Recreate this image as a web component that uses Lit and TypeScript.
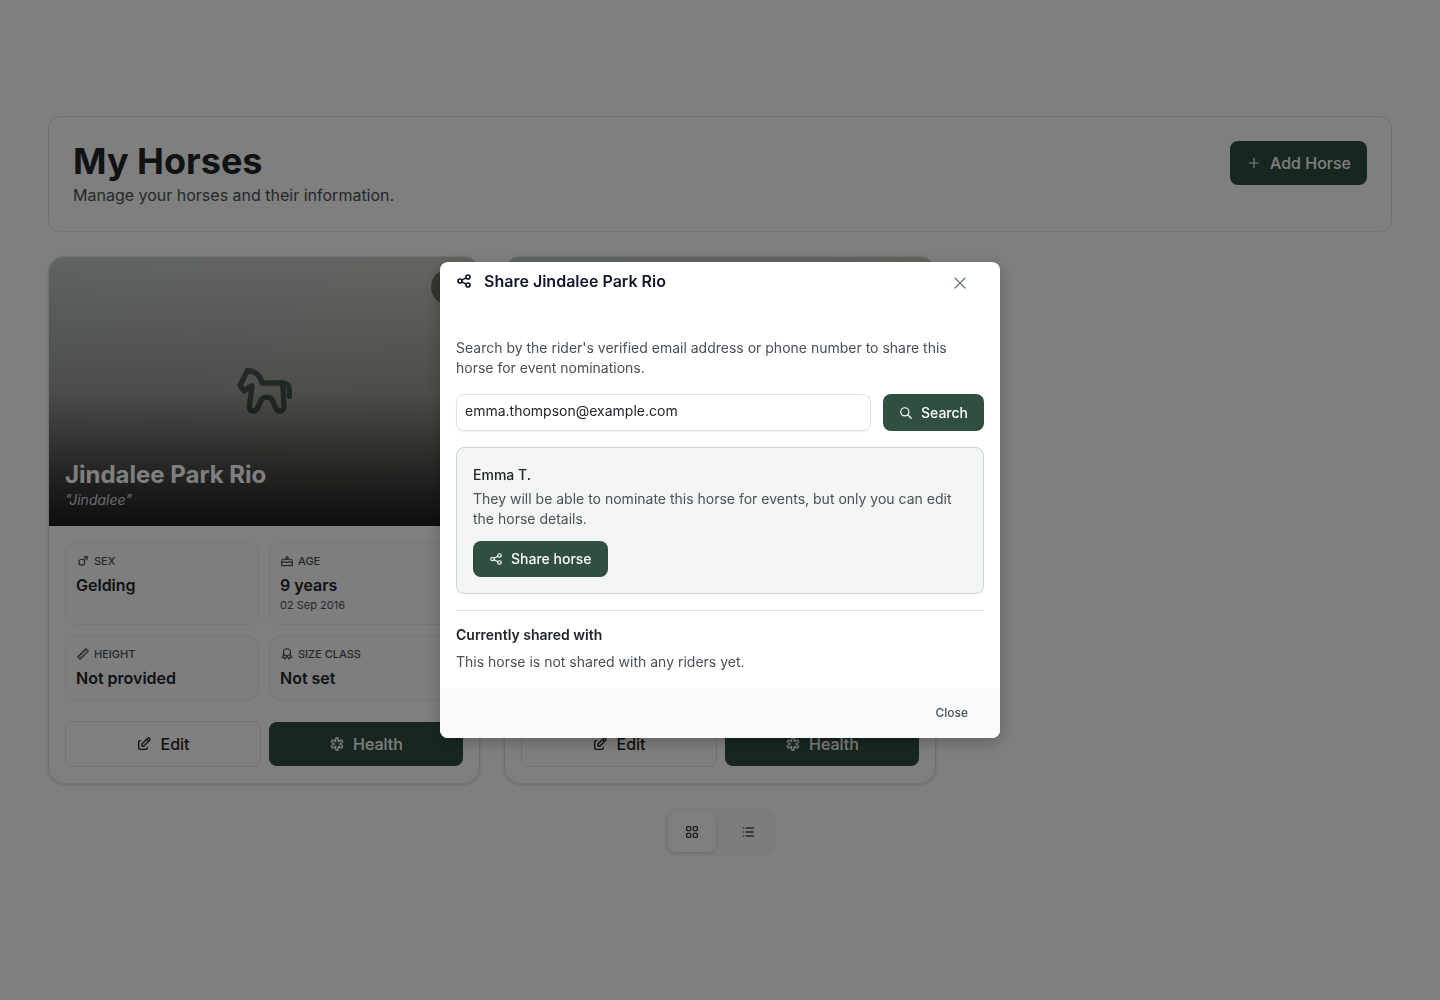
import { LitElement, html, css, svg } from "lit";
import { customElement, property, state } from "lit/decorators.js";

const ICONS: Record<string, string[]> = {
  plus: ["M12 5v14", "M5 12h14"],
  close: ["M18 6L6 18", "M6 6l12 12"],
  search: ["M3 10a7 7 0 1 0 14 0a7 7 0 1 0 -14 0", "M21 21l-6 -6"],
  share: [
    "M3 12a3 3 0 1 0 6 0a3 3 0 1 0 -6 0",
    "M15 6a3 3 0 1 0 6 0a3 3 0 1 0 -6 0",
    "M15 18a3 3 0 1 0 6 0a3 3 0 1 0 -6 0",
    "M8.7 10.7l6.6 -3.4",
    "M8.7 13.3l6.6 3.4",
  ],
  edit: [
    "M7 7h-1a2 2 0 0 0 -2 2v9a2 2 0 0 0 2 2h9a2 2 0 0 0 2 -2v-1",
    "M20.385 6.585a2.1 2.1 0 0 0 -2.97 -2.97l-8.415 8.385v3h3l8.385 -8.415z",
    "M16 5l3 3",
  ],
  health: [
    "M13 3a1 1 0 0 1 1 1v4.535l3.928 -2.267a1 1 0 0 1 1.366 .366l1 1.732a1 1 0 0 1 -.366 1.366l-3.927 2.268l3.927 2.269a1 1 0 0 1 .366 1.366l-1 1.732a1 1 0 0 1 -1.366 .366l-3.928 -2.269v4.536a1 1 0 0 1 -1 1h-2a1 1 0 0 1 -1 -1v-4.536l-3.928 2.268a1 1 0 0 1 -1.366 -.366l-1 -1.732a1 1 0 0 1 .366 -1.366l3.927 -2.267l-3.927 -2.268a1 1 0 0 1 -.366 -1.366l1 -1.732a1 1 0 0 1 1.366 -.366l3.928 2.267v-4.535a1 1 0 0 1 1 -1h2z",
  ],
  male: ["M5 14a5 5 0 1 0 10 0a5 5 0 1 0 -10 0", "M19 5l-5.4 5.4", "M19 5h-5", "M19 5v5"],
  cake: [
    "M3 20h18v-8a3 3 0 0 0 -3 -3h-12a3 3 0 0 0 -3 3v8z",
    "M3 14.803c.312 .135 .654 .204 1 .197a2.4 2.4 0 0 0 2 -1a2.4 2.4 0 0 1 2 -1a2.4 2.4 0 0 1 2 1a2.4 2.4 0 0 0 2 1a2.4 2.4 0 0 0 2 -1a2.4 2.4 0 0 1 2 -1a2.4 2.4 0 0 1 2 1a2.4 2.4 0 0 0 2 1c.35 .007 .692 -.062 1 -.197",
    "M12 4l1.465 1.638a2 2 0 1 1 -3.015 .099l1.55 -1.737z",
  ],
  ruler: [
    "M17 3l4 4l-14 14l-4 -4z",
    "M16 7l-1.5 -1.5",
    "M13 10l-1.5 -1.5",
    "M10 13l-1.5 -1.5",
    "M7 16l-1.5 -1.5",
  ],
  award: [
    "M6 9a6 6 0 1 0 12 0a6 6 0 1 0 -12 0",
    "M12 15l3.4 5.89l1.598 -3.233l3.598 .232l-3.4 -5.889",
    "M6.802 12l-3.4 5.89l3.598 -.233l1.598 3.232l3.4 -5.889",
  ],
  grid: [
    "M5 4h4a1 1 0 0 1 1 1v4a1 1 0 0 1 -1 1h-4a1 1 0 0 1 -1 -1v-4a1 1 0 0 1 1 -1z",
    "M15 4h4a1 1 0 0 1 1 1v4a1 1 0 0 1 -1 1h-4a1 1 0 0 1 -1 -1v-4a1 1 0 0 1 1 -1z",
    "M5 14h4a1 1 0 0 1 1 1v4a1 1 0 0 1 -1 1h-4a1 1 0 0 1 -1 -1v-4a1 1 0 0 1 1 -1z",
    "M15 14h4a1 1 0 0 1 1 1v4a1 1 0 0 1 -1 1h-4a1 1 0 0 1 -1 -1v-4a1 1 0 0 1 1 -1z",
  ],
  list: ["M9 6h11", "M9 12h11", "M9 18h11", "M5 6v.01", "M5 12v.01", "M5 18v.01"],
  horse: [
    "M11.2 9H19L19.5 17.7C19.6 18.8 18.9 19.5 18 19.5C17.2 19.5 16.7 19.1 16.4 18.4L15.3 15.8C14.9 14.8 14.3 14.4 13.5 14.4H12.5C11.7 14.4 11.2 14.8 10.8 15.7L9.6 18.4C9.2 19.2 8.6 19.5 7.9 19.5C7 19.5 6.4 18.8 6.5 17.8L7.5 10L4.5 12L3 9.9L5.8 4.3C8.4 4.3 10.8 6.3 11.2 9z",
    "M19 9C20.6 9 21.5 10.1 21.5 11.4V14",
  ],
  more: ["M11 12h2", "M11 19h2", "M11 5h2"],
};

@customElement("ui-icon")
export class UiIcon extends LitElement {
  @property() name = "";
  @property({ type: Number }) size = 16;
  @property({ type: Number }) weight = 2;

  static styles = css`
    :host {
      display: inline-flex;
      flex: none;
    }
    .icon {
      display: block;
      fill: none;
      stroke: currentColor;
      stroke-linecap: round;
      stroke-linejoin: round;
    }
  `;

  render() {
    return html`<svg
      class="icon"
      width=${this.size}
      height=${this.size}
      viewBox="0 0 24 24"
      stroke-width=${this.weight}
      aria-hidden="true"
    >
      ${(ICONS[this.name] ?? []).map((d) => svg`<path d=${d}></path>`)}
    </svg>`;
  }
}

const controls = css`
  * {
    box-sizing: border-box;
  }
  h1, h2, h3, p, dl, dd, dt {
    margin: 0;
  }
  button, input {
    font: inherit;
    color: inherit;
  }
  .btn {
    display: inline-flex;
    align-items: center;
    justify-content: center;
    gap: 8px;
    padding: 10px 16px;
    border: 0;
    border-radius: 8px;
    font-size: 16px;
    font-weight: 500;
    line-height: 24px;
    white-space: nowrap;
    cursor: pointer;
  }
  .primary {
    background: #2f4f3f;
    color: #fff;
  }
  .small {
    padding: 8px 16px;
    font-size: 14px;
    line-height: 20px;
  }
`;

interface Fact {
  icon: string;
  label: string;
  value: string;
  note?: string;
}

interface Horse {
  name?: string;
  nickname?: string;
  facts: Fact[];
}

@customElement("horse-card")
export class HorseCard extends LitElement {
  @property({ attribute: false }) horse!: Horse;

  static styles = [
    controls,
    css`
      :host {
        display: flex;
      }
      .card {
        display: flex;
        flex: 1;
        flex-direction: column;
        overflow: hidden;
        border: 1px solid #dee2e6;
        border-radius: 16px;
        background: #fff;
        box-shadow: 0 1px 3px rgba(0, 0, 0, 0.16);
      }
      .photo {
        position: relative;
        display: flex;
        align-items: center;
        justify-content: center;
        aspect-ratio: 16 / 10;
        color: #566d5e;
        background: linear-gradient(135deg, #c4d0cf 0%, #d0d1cb 45%, #d2d2c2 72%, #d6d5d0 100%);
      }
      .shade {
        position: absolute;
        inset: 0;
        background: linear-gradient(
          to bottom,
          rgba(0, 0, 0, 0.03) 0%,
          rgba(0, 0, 0, 0.15) 25%,
          rgba(0, 0, 0, 0.26) 50%,
          rgba(0, 0, 0, 0.5) 68%,
          rgba(0, 0, 0, 0.7) 84%,
          rgba(0, 0, 0, 0.87) 100%
        );
      }
      .caption {
        position: absolute;
        left: 16px;
        right: 16px;
        bottom: 16px;
        z-index: 1;
        color: #fff;
      }
      .name {
        font-size: 24px;
        font-weight: 700;
        line-height: 30px;
      }
      .nickname {
        font-size: 14px;
        font-style: italic;
        line-height: 20px;
        color: rgba(255, 255, 255, 0.8);
      }
      .more {
        position: absolute;
        top: 12px;
        right: 12px;
        z-index: 1;
        display: flex;
        align-items: center;
        justify-content: center;
        width: 36px;
        height: 36px;
        padding: 0;
        border: 0;
        border-radius: 50%;
        background: rgba(0, 0, 0, 0.44);
        color: #fff;
      }
      .body {
        display: flex;
        flex: 1;
        flex-direction: column;
        justify-content: space-between;
        gap: 20px;
        padding: 16px;
      }
      .facts {
        display: grid;
        grid-template-columns: 1fr 1fr;
        gap: 10px;
      }
      .fact {
        padding: 10px;
        border: 1px solid #eceeef;
        border-radius: 12px;
        background: #fcfcfc;
      }
      .label {
        display: flex;
        align-items: center;
        gap: 4px;
        margin-bottom: 4px;
        font-size: 11px;
        font-weight: 500;
        line-height: 16px;
        color: #495057;
        text-transform: uppercase;
      }
      .value {
        font-size: 16px;
        font-weight: 600;
        line-height: 24px;
        color: #212529;
      }
      .note {
        font-size: 11px;
        line-height: 17px;
        color: #495057;
      }
      .actions {
        display: flex;
        align-items: center;
        gap: 8px;
      }
      .actions .btn {
        flex: 1;
      }
      .outline {
        border: 1px solid #dee2e6;
        background: #fff;
        color: #212529;
      }
    `,
  ];

  private fact(f: Fact) {
    return html`<div class="fact">
      <dt class="label"><ui-icon name=${f.icon} size="14"></ui-icon>${f.label}</dt>
      <dd class="value">${f.value}</dd>
      ${f.note ? html`<dd class="note">${f.note}</dd>` : ""}
    </div>`;
  }

  render() {
    const h = this.horse;
    return html`<article class="card">
      <div class="photo">
        <ui-icon name="horse" size="64"></ui-icon>
        <div class="shade"></div>
        <button class="more" aria-label="More"><ui-icon name="more" size="16"></ui-icon></button>
        ${h.name
          ? html`<div class="caption">
              <h2 class="name">${h.name}</h2>
              <p class="nickname">"${h.nickname}"</p>
            </div>`
          : ""}
      </div>
      <div class="body">
        <dl class="facts">${h.facts.map((f) => this.fact(f))}</dl>
        <div class="actions">
          <button class="btn outline"><ui-icon name="edit" size="16"></ui-icon>Edit</button>
          <button class="btn primary"><ui-icon name="health" size="16"></ui-icon>Health</button>
        </div>
      </div>
    </article>`;
  }
}

@customElement("share-dialog")
export class ShareDialog extends LitElement {
  @property() horse = "";
  @state() private query = "emma.thompson@example.com";

  static styles = [
    controls,
    css`
      :host {
        display: block;
        width: 100%;
        max-width: 560px;
      }
      .dialog {
        overflow: hidden;
        border-radius: 8px;
        background: #fff;
        color: #495057;
        font-size: 14px;
        line-height: 20px;
        box-shadow: 0 4px 16px rgba(0, 0, 0, 0.25);
      }
      .head {
        display: flex;
        align-items: flex-start;
        justify-content: space-between;
        padding: 7px 24px 25px 16px;
        color: #0f172a;
      }
      .title {
        display: flex;
        align-items: center;
        gap: 12px;
        font-size: 16px;
        font-weight: 600;
        line-height: 24px;
      }
      .dismiss {
        display: flex;
        padding: 4px 6px;
        border: 0;
        background: none;
        color: #64748b;
      }
      .content {
        display: flex;
        flex-direction: column;
        gap: 16px;
        padding: 16px;
      }
      .search {
        display: flex;
        gap: 12px;
      }
      .field {
        flex: 1;
        min-width: 0;
        padding: 6px 8px 10px;
        border: 1px solid #dee2e6;
        border-radius: 8px;
        background: #fff;
        color: #212529;
        font-size: 14px;
        line-height: 19px;
        box-shadow: 0 1px 2px rgba(0, 0, 0, 0.06);
      }
      .match {
        padding: 16px;
        border: 1px solid #ccd5d1;
        border-radius: 8px;
        background: #f3f5f4;
      }
      .rider {
        margin-bottom: 4px;
        font-size: 14px;
        font-weight: 500;
        line-height: 21px;
        color: #212529;
      }
      .match .btn {
        margin-top: 12px;
      }
      .shared {
        padding-top: 16px;
        border-top: 1px solid #dee2e6;
      }
      .subhead {
        margin-bottom: 9px;
        font-size: 14px;
        font-weight: 600;
        line-height: 16px;
        color: #212529;
      }
      .foot {
        display: flex;
        justify-content: flex-end;
        padding: 8px 16px;
        background: #f8fafc;
      }
      .close {
        padding: 8px 16px;
        border: 0;
        background: none;
        color: #495057;
        font-size: 12px;
        font-weight: 500;
        line-height: 18px;
      }
    `,
  ];

  render() {
    return html`<section class="dialog" role="dialog" aria-modal="true" aria-labelledby="title">
      <header class="head">
        <h2 class="title" id="title">
          <ui-icon name="share" size="16" weight="2.5"></ui-icon>Share ${this.horse}
        </h2>
        <button class="dismiss" aria-label="Dismiss">
          <ui-icon name="close" size="20" weight="1.5"></ui-icon>
        </button>
      </header>
      <div class="content">
        <p id="hint">
          Search by the rider's verified email address or phone number to share this horse for event
          nominations.
        </p>
        <div class="search">
          <input
            class="field"
            type="text"
            aria-labelledby="hint"
            .value=${this.query}
            @input=${(e: Event) => (this.query = (e.target as HTMLInputElement).value)}
          />
          <button class="btn primary small"><ui-icon name="search" size="14"></ui-icon>Search</button>
        </div>
        <div class="match">
          <h3 class="rider">Emma T.</h3>
          <p>They will be able to nominate this horse for events, but only you can edit the horse details.</p>
          <button class="btn primary small"><ui-icon name="share" size="14"></ui-icon>Share horse</button>
        </div>
        <div class="shared">
          <h3 class="subhead">Currently shared with</h3>
          <p>This horse is not shared with any riders yet.</p>
        </div>
      </div>
      <footer class="foot"><button class="close">Close</button></footer>
    </section>`;
  }
}

@customElement("app-root")
export class AppRoot extends LitElement {
  private horses: Horse[] = [
    {
      name: "Jindalee Park Rio",
      nickname: "Jindalee",
      facts: [
        { icon: "male", label: "Sex", value: "Gelding" },
        { icon: "cake", label: "Age", value: "9 years", note: "02 Sep 2016" },
        { icon: "ruler", label: "Height", value: "Not provided" },
        { icon: "award", label: "Size class", value: "Not set" },
      ],
    },
    { facts: [] },
  ];

  static styles = [
    controls,
    css`
      :host {
        display: block;
        font-family: Inter, "Liberation Sans", sans-serif;
        color: #212529;
      }
      .page {
        display: flex;
        flex-direction: column;
        gap: 24px;
        min-height: 100vh;
        padding: 116px 48px;
        background: #fff;
      }
      .banner {
        display: flex;
        align-items: flex-start;
        justify-content: space-between;
        padding: 24px;
        border: 1px solid #dee2e6;
        border-radius: 12px;
      }
      .heading {
        display: flex;
        flex-direction: column;
        gap: 2px;
      }
      .title {
        font-size: 36px;
        font-weight: 700;
        line-height: 40px;
      }
      .lead {
        font-size: 16px;
        line-height: 24px;
        color: #495057;
      }
      .cards {
        display: grid;
        grid-template-columns: repeat(auto-fill, minmax(400px, 1fr));
        gap: 24px;
      }
      .views {
        display: flex;
        align-self: center;
        gap: 8px;
        padding: 4px;
        border-radius: 12px;
        background: #f8f8f8;
      }
      .view {
        display: flex;
        padding: 12px 16px;
        border: 0;
        border-radius: 8px;
        background: none;
        color: #495057;
      }
      .view.active {
        background: #fff;
        color: #2f4f3f;
        box-shadow: 0 1px 3px rgba(0, 0, 0, 0.14);
      }
      .overlay {
        position: fixed;
        inset: 0;
        z-index: 10;
        display: flex;
        align-items: center;
        justify-content: center;
        background: rgba(0, 0, 0, 0.5);
      }
    `,
  ];

  render() {
    return html`<main class="page">
        <header class="banner">
          <div class="heading">
            <h1 class="title">My Horses</h1>
            <p class="lead">Manage your horses and their information.</p>
          </div>
          <button class="btn primary">
            <ui-icon name="plus" size="16" weight="1.75"></ui-icon>Add Horse
          </button>
        </header>
        <div class="cards">
          ${this.horses.map((h) => html`<horse-card .horse=${h}></horse-card>`)}
        </div>
        <div class="views">
          <button class="view active" aria-label="Grid view"><ui-icon name="grid" size="16"></ui-icon></button>
          <button class="view" aria-label="List view"><ui-icon name="list" size="16"></ui-icon></button>
        </div>
      </main>
      <div class="overlay"><share-dialog horse="Jindalee Park Rio"></share-dialog></div>`;
  }
}
